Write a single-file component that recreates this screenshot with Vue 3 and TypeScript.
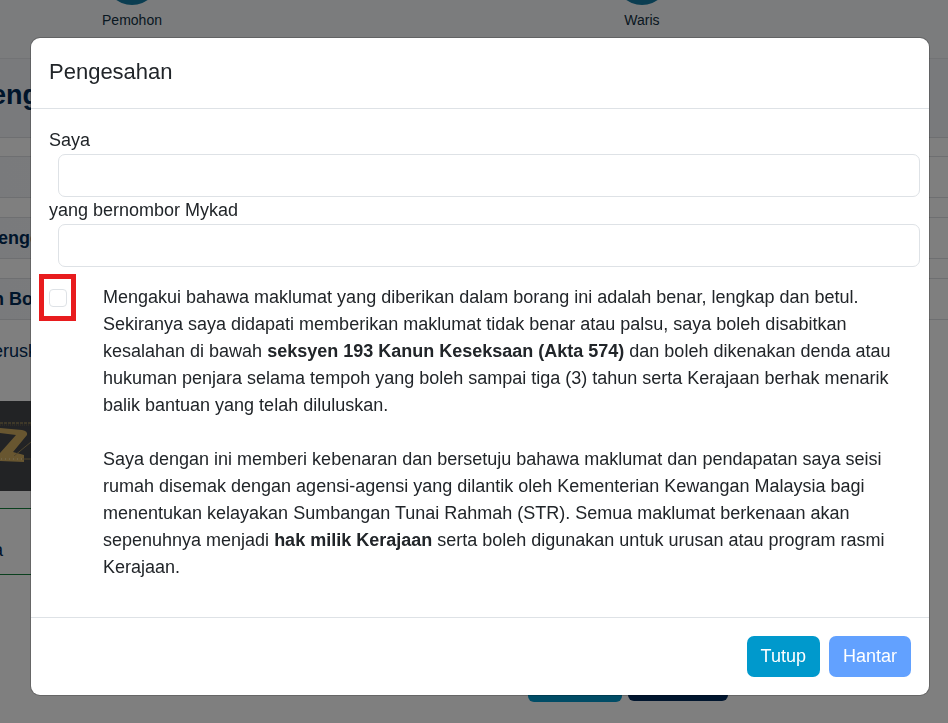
<script setup lang="ts">
import { ref } from 'vue'

const steps: string[] = ['Pemohon', 'Waris']
const nama = ref('')
const mykad = ref('')
const setuju = ref(false)
</script>

<template>
  <div class="page">
    <nav class="steps">
      <div v-for="step in steps" :key="step" class="step">
        <span class="dot"></span>
        <span>{{ step }}</span>
      </div>
    </nav>
    <h1 class="page-title">eng</h1>
    <section class="panels">
      <div class="panel"></div>
      <div class="panel">enge</div>
      <div class="panel shifted">n Bo</div>
    </section>
    <p class="note">erusk</p>
    <div class="banner">
      <svg width="60" height="90" viewBox="0 0 60 90" aria-hidden="true">
        <path d="M0 22H60" stroke="#b39a5a" stroke-width="1" stroke-dasharray="3 1" />
        <path d="M0 24H60" stroke="#75684a" stroke-width="1" stroke-dasharray="1 1" />
        <path d="M0 27L22 29Q28 30 27 34L13 51L24 54V61L0 60V52L16 34L0 32Z" fill="#d1ad61" />
        <path d="M14 55L31 41M22 58H31" stroke="#a18a5c" stroke-width="1" />
        <path d="M1 58H22" stroke="#eee0b8" stroke-width="1" stroke-dasharray="1 3" />
      </svg>
    </div>
    <div class="alert">a</div>
    <div class="page-actions">
      <span class="chip"></span>
      <span class="chip dark"></span>
    </div>
  </div>

  <div class="backdrop">
    <form class="modal" role="dialog" aria-labelledby="modal-title" @submit.prevent>
      <header class="modal-header">
        <h2 id="modal-title">Pengesahan</h2>
      </header>
      <div class="modal-body">
        <label for="nama">Saya</label>
        <input id="nama" v-model="nama" class="field" type="text" />
        <label for="mykad">yang bernombor Mykad</label>
        <input id="mykad" v-model="mykad" class="field" type="text" />
        <div class="consent">
          <div class="mark">
            <input id="setuju" v-model="setuju" type="checkbox" />
          </div>
          <label for="setuju" class="terms">
            <span>Mengakui bahawa maklumat yang diberikan dalam borang ini adalah benar, lengkap dan betul. Sekiranya saya didapati memberikan maklumat tidak benar atau palsu, saya boleh disabitkan kesalahan di bawah <b>seksyen 193 Kanun Keseksaan (Akta 574)</b> dan boleh dikenakan denda atau hukuman penjara selama tempoh yang boleh sampai tiga (3) tahun serta Kerajaan berhak menarik balik bantuan yang telah diluluskan.</span>
            <span>Saya dengan ini memberi kebenaran dan bersetuju bahawa maklumat dan pendapatan saya seisi rumah disemak dengan agensi-agensi yang dilantik oleh Kementerian Kewangan Malaysia bagi menentukan kelayakan Sumbangan Tunai Rahmah (STR). Semua maklumat berkenaan akan sepenuhnya menjadi <b>hak milik Kerajaan</b> serta boleh digunakan untuk urusan atau program rasmi Kerajaan.</span>
          </label>
        </div>
      </div>
      <footer class="modal-footer">
        <button type="button" class="btn">Tutup</button>
        <button type="submit" class="btn primary" :disabled="!setuju">Hantar</button>
      </footer>
    </form>
  </div>
</template>

<style>
body {
  margin: 0;
  overflow: hidden;
  background: #ffffff;
}
</style>

<style scoped>
* {
  box-sizing: border-box;
}

.page,
.backdrop {
  font-family: 'Liberation Sans', Arial, sans-serif;
  font-size: 18px;
  line-height: 27px;
  color: #212529;
}

.page {
  color: #002b57;
  overflow: hidden;
}

.steps {
  display: flex;
  height: 59px;
  margin-left: -123px;
  background: #f6f8fb;
  border-bottom: 1px solid #e4e6ea;
}

.step {
  flex: 0 0 510px;
  display: flex;
  flex-direction: column;
  align-items: center;
  gap: 5px;
  margin-top: -49px;
  font-size: 14px;
  line-height: 20px;
  color: #123142;
}

.dot {
  width: 54px;
  height: 54px;
  flex: none;
  border-radius: 50%;
  background: #147ba3;
}

.page-title {
  height: 79px;
  margin: 0;
  text-indent: -9px;
  font-size: 27px;
  line-height: 72px;
  background: #f3f5f9;
  border-bottom: 1px solid #dddfe2;
}

.panels {
  display: flex;
  flex-direction: column;
  gap: 19px;
  padding-top: 18px;
}

.panel {
  height: 42px;
  font-weight: bold;
  line-height: 40px;
  text-indent: -2px;
  background: linear-gradient(90deg, #f3f5f8, #ffffff);
  border: solid #dddfe2;
  border-width: 1px 0;
}

.panel.shifted {
  text-indent: -7px;
}

.note {
  margin: 18px 0 36px;
  text-indent: -7px;
}

.banner,
.alert {
  width: 50%;
}

.banner {
  height: 90px;
  background: #44474b;
}

.banner svg {
  display: block;
  fill: none;
}

.alert {
  height: 67px;
  margin-top: 17px;
  padding-top: 28px;
  text-indent: -7px;
  border: solid #15803d;
  border-width: 1px 0;
}

.page-actions {
  display: flex;
  align-items: flex-start;
  gap: 6px;
  margin: 85px 0 0 528px;
}

.chip {
  width: 94px;
  height: 42px;
  border-radius: 6px;
  background: #0099cc;
}

.chip.dark {
  width: 100px;
  height: 41px;
  background: #002a5c;
}

.backdrop {
  position: fixed;
  inset: 0;
  padding: 38px 19px 28px 31px;
  overflow: auto;
  background: rgba(0, 0, 0, 0.5);
}

.modal {
  background: #ffffff;
  border-radius: 9px;
  box-shadow: 0 0 0 1px rgba(0, 0, 0, 0.2);
}

.modal-header {
  padding: 17px 18px 19px;
  border-bottom: 1px solid #dee2e6;
}

.modal-header h2 {
  margin: 0;
  font-size: 22px;
  font-weight: 400;
  line-height: 34px;
}

.modal-body {
  padding: 18px 18px 36px;
}

.modal-body > label {
  display: block;
}

.field {
  display: block;
  width: 100%;
  height: 43px;
  margin-left: 9px;
  padding: 7px 14px;
  font: inherit;
  color: inherit;
  background: #ffffff;
  border: 1px solid #dee2e6;
  border-radius: 7px;
}

.consent {
  display: flex;
  align-items: flex-start;
  gap: 27px;
  margin-top: 17px;
}

.mark {
  flex: none;
  display: grid;
  place-items: center;
  width: 37px;
  height: 47px;
  margin: -10px 0 0 -10px;
  border: 5px solid #e81c1e;
}

.mark input {
  appearance: none;
  width: 18px;
  height: 18px;
  margin: 0;
  border: 1px solid #dee2e6;
  border-radius: 4px;
  background: #ffffff;
}

.mark input:checked {
  background: #0099cc;
}

.terms {
  display: flex;
  flex-direction: column;
  gap: 27px;
}

.modal-footer {
  display: flex;
  justify-content: flex-end;
  gap: 9px;
  padding: 18px;
  border-top: 1px solid #dee2e6;
}

.btn {
  padding: 7px 14px;
  font: inherit;
  color: #ffffff;
  background: #0099cc;
  border: 0;
  border-radius: 7px;
}

.btn.primary {
  background: #62a1ff;
}
</style>
